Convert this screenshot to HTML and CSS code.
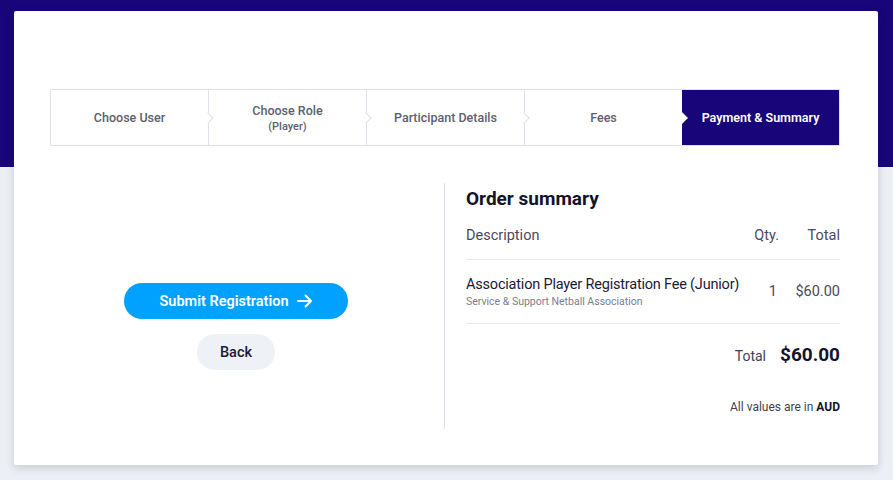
FILE: index.html
```html
<!DOCTYPE html>
<html>
<head>
    <title>Registration - Payment & Summary</title>
    <link rel="stylesheet" href="styles.css">
</head>
<body>
    <div class="band"></div>
    <div class="card">
        <div class="stepper">
            <div class="step">Choose User</div>
            <div class="step">Choose Role<span class="sub">(Player)</span></div>
            <div class="step">Participant Details</div>
            <div class="step before-active">Fees</div>
            <div class="step active">Payment &amp; Summary</div>
        </div>

        <div class="columns">
            <div class="actions">
                <button class="btn-submit">Submit Registration
                    <svg width="16" height="14" viewBox="0 0 16 14" fill="none" stroke="#fff" stroke-width="2" stroke-linecap="round" stroke-linejoin="round"><path d="M1 7h13M8.5 1.5L14 7l-5.5 5.5"/></svg>
                </button>
                <button class="btn-back">Back</button>
            </div>

            <div class="summary">
                <h2>Order summary</h2>
                <div class="row head">
                    <div class="desc">Description</div>
                    <div class="qty">Qty.</div>
                    <div class="amt">Total</div>
                </div>
                <div class="row item">
                    <div class="desc">
                        <div class="name">Association Player Registration Fee (Junior)</div>
                        <div class="org">Service &amp; Support Netball Association</div>
                    </div>
                    <div class="qty">1</div>
                    <div class="amt">$60.00</div>
                </div>
                <div class="total">
                    <span class="label">Total</span>
                    <span class="value">$60.00</span>
                </div>
                <p class="currency">All values are in <b>AUD</b></p>
            </div>
        </div>
    </div>
</body>
</html>
```

FILE: styles.css
```css
body {
    margin: 0;
    background: #eceff4;
    font-family: "Roboto", "Liberation Sans", sans-serif;
    color: #1b1a36;
}

.band {
    height: 167px;
    background: #170579;
}

.card {
    background: #fff;
    margin: -156px 15px 15px 14px;
    border-radius: 2px;
    box-shadow: 0 3px 8px rgba(40, 45, 70, 0.18);
    padding: 78px 38px 36px 36px;
    position: relative;
}

/* stepper */
.stepper {
    display: flex;
    border: 1px solid #e1e1ea;
    height: 55px;
}
.step {
    flex: 1;
    display: flex;
    flex-direction: column;
    align-items: center;
    justify-content: center;
    font-size: 12.5px;
    font-weight: 500;
    color: #5e5e70;
    border-right: 1px solid #e1e1ea;
    position: relative;
}
.step .sub {
    font-size: 11px;
    margin-top: 2px;
}
.step::after {
    content: "";
    position: absolute;
    right: -4px;
    top: 50%;
    width: 7px;
    height: 7px;
    margin-top: -4px;
    background: #fff;
    border-top: 1px solid #e1e1ea;
    border-right: 1px solid #e1e1ea;
    transform: rotate(45deg);
    z-index: 1;
}
.step.before-active {
    border-right: none;
}
.step.before-active::after {
    border-color: #fff;
}
.step.active {
    background: #170579;
    color: #fff;
    font-weight: 600;
    border-right: none;
}
.step.active::after {
    display: none;
}

/* columns */
.columns {
    display: grid;
    grid-template-columns: 394px 1fr;
    margin-top: 37px;
}

.actions {
    display: flex;
    flex-direction: column;
    align-items: center;
    padding: 100px 22px 0 0;
}
.btn-submit {
    width: 224px;
    height: 36px;
    border: none;
    border-radius: 18px;
    background: #00a1ff;
    color: #fff;
    font-family: inherit;
    font-size: 14.5px;
    font-weight: 600;
    display: flex;
    align-items: center;
    justify-content: center;
    gap: 8px;
}
.btn-back {
    margin-top: 15px;
    width: 78px;
    height: 36px;
    border: none;
    border-radius: 18px;
    background: #eef1f6;
    color: #1b1a36;
    font-family: inherit;
    font-size: 14.5px;
    font-weight: 500;
}

.summary {
    border-left: 1px solid #e1e1ea;
    padding: 0 0 0 21px;
    min-height: 246px;
}
.summary h2 {
    margin: 3px 0 0;
    font-size: 19px;
    font-weight: 700;
    line-height: 26px;
    color: #15132b;
}

.row {
    display: grid;
    grid-template-columns: 1fr auto 61px;
    align-items: center;
    border-bottom: 1px solid #e6e6ec;
}
.row .qty {
    text-align: right;
}
.row .amt {
    text-align: right;
}
.row.head {
    height: 47px;
    font-size: 14.5px;
    color: #4a4a5c;
}
.row.item {
    height: 63px;
    font-size: 14.5px;
    color: #4a4a5c;
}
.row.item .qty {
    padding-right: 2px;
}
.item .name {
    color: #1b1a36;
    letter-spacing: -0.2px;
}
.item .org {
    font-size: 10.5px;
    color: #7d7d8e;
    margin-top: 2px;
}

.total {
    display: flex;
    justify-content: flex-end;
    align-items: baseline;
    gap: 14px;
    margin-top: 19px;
}
.total .label {
    font-size: 14px;
    color: #3f3f52;
}
.total .value {
    font-size: 19px;
    font-weight: 700;
    color: #15132b;
}

.currency {
    text-align: right;
    font-size: 12px;
    color: #3f3f52;
    margin: 34px 0 0;
}
.currency b {
    color: #15132b;
}
```
